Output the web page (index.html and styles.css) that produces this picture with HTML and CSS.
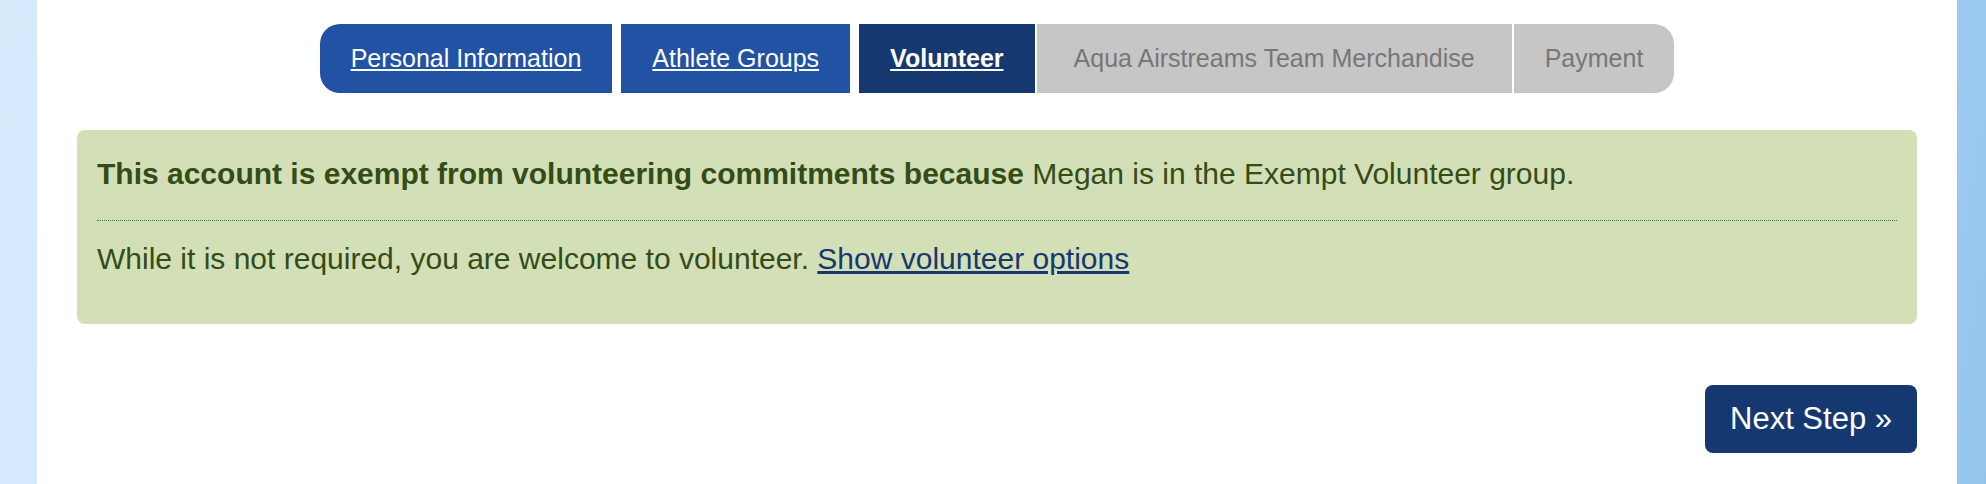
FILE: index.html
```html
<!DOCTYPE html>
<html lang="en">
<head>
    <meta charset="UTF-8">
    <meta name="viewport" content="width=device-width, initial-scale=1.0">
    <title>Registration - Volunteer</title>
    <link rel="stylesheet" href="styles.css">
</head>
<body>
    <div class="page">
        <ul class="steps">
            <li class="step done first"><a href="#">Personal Information</a></li>
            <li class="step done"><a href="#">Athlete Groups</a></li>
            <li class="step current"><a href="#">Volunteer</a></li>
            <li class="step pending wide"><span>Aqua Airstreams Team Merchandise</span></li>
            <li class="step pending last"><span>Payment</span></li>
        </ul>

        <div class="notice">
            <div class="notice-head">
                <strong>This account is exempt from volunteering commitments because</strong> Megan is in the Exempt Volunteer group.
            </div>
            <div class="notice-body">
                While it is not required, you are welcome to volunteer. <a href="#">Show volunteer options</a>
            </div>
        </div>

        <div class="actions">
            <button class="next-step">Next Step &raquo;</button>
        </div>
    </div>
</body>
</html>
```

FILE: styles.css
```css
html, body {
    margin: 0;
    padding: 0;
}

body {
    font-family: "Liberation Sans", Arial, Helvetica, sans-serif;
    min-height: 484px;
    background: linear-gradient(100deg, #d6eafc 0%, #c9e3fa 40%, #b4d9f8 80%, #94c4ec 100%);
}

.page {
    margin-left: 37px;
    width: 1920px;
    min-height: 484px;
    box-sizing: border-box;
    padding: 24px 40px;
    background-color: #fff;
}

.steps {
    display: flex;
    justify-content: center;
    list-style: none;
    margin: 0 0 37px 0;
    padding: 0;
}

.step {
    height: 69px;
    display: flex;
    align-items: center;
    padding: 0 31px;
    font-size: 25px;
}

.step a {
    color: #fff;
    text-decoration: underline;
}

.step.done {
    background-color: #2252a4;
    margin-right: 9px;
}

.step.current {
    background-color: #163870;
    margin-right: 2px;
}

.step.current a {
    font-weight: bold;
}

.step.pending {
    background-color: #c6c6c6;
    color: #777;
    margin-right: 2px;
}

.step.wide {
    padding: 0 37px;
}

.step.first {
    border-radius: 20px 0 0 20px;
}

.step.last {
    margin-right: 0;
    border-radius: 0 20px 20px 0;
}

.notice {
    background-color: #d3dfb7;
    color: #344c16;
    border-radius: 8px;
    padding: 27px 20px 48px;
    font-size: 30px;
}

.notice-head {
    padding-bottom: 29px;
    border-bottom: 1px dotted #3d7a26;
    margin-bottom: 21px;
}

.notice-body a {
    color: #163870;
}

.actions {
    display: flex;
    justify-content: flex-end;
    margin-top: 61px;
}

.next-step {
    height: 68px;
    padding: 0 25px;
    border: none;
    border-radius: 8px;
    background-color: #163870;
    color: #fff;
    font-family: inherit;
    font-size: 31px;
    cursor: pointer;
}
```
